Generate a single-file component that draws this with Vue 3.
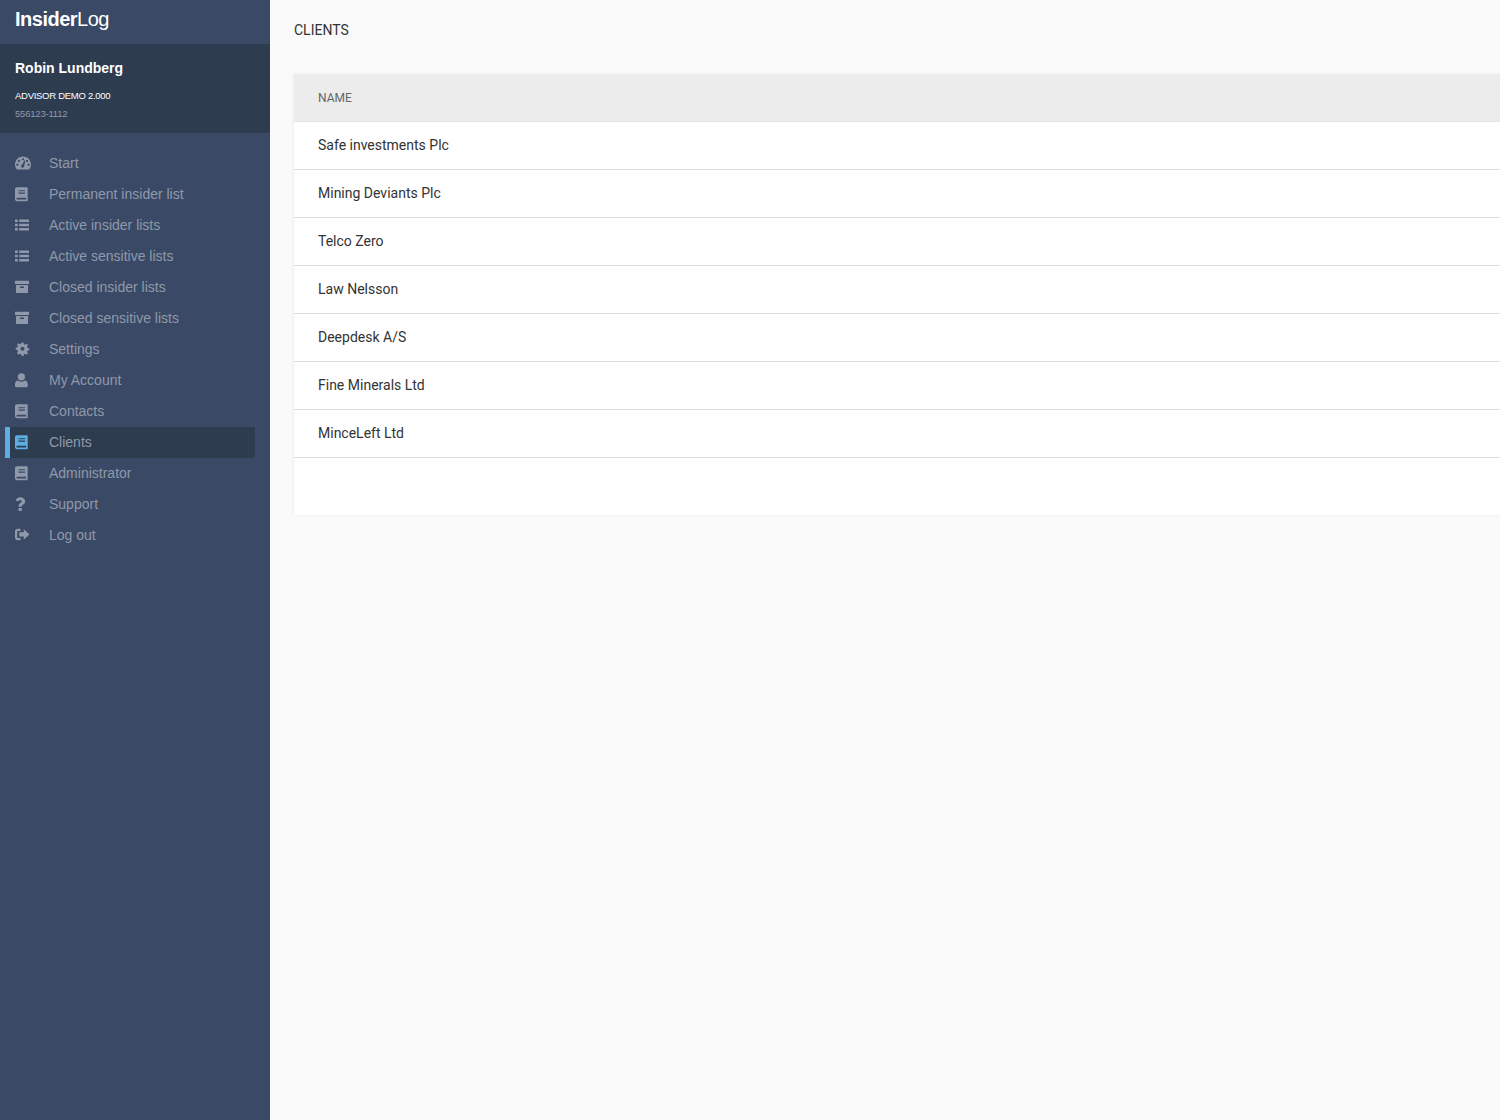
<script setup>
const icons = {
  dash: 'M2 13.500C.8 12.200 0 10.400 0 8.500 0 4.100 3.600.5 8 .5s8 3.600 8 8c0 1.900-.8 3.700-2 5H2zM8 2.200a1.100 1.100 0 1 0 0 2.200 1.100 1.100 0 0 0 0-2.200zM4 3.800a1.100 1.100 0 1 0 0 2.200 1.100 1.100 0 0 0 0-2.200zM12 3.800a1.100 1.100 0 1 0 0 2.200 1.100 1.100 0 0 0 0-2.200zM2.400 7.600a1.100 1.100 0 1 0 0 2.200 1.100 1.100 0 0 0 0-2.200zM13.600 7.600a1.100 1.100 0 1 0 0 2.200 1.100 1.100 0 0 0 0-2.200zM9.600 4.200 7.200 8.600a1.600 1.600 0 1 0 2 .9l1.200-5z',
  book: 'M2 .3h9.700c.7 0 1 .4 1 1v11.900c0 .6-.3 1-1 1H2c-1.200 0-2-.9-2-2.200V2.300C0 1.100.8.300 2 .3zM3.500 3.200v1.100h6.500V3.200H3.500zM3.500 5.600v1.100h6.500V5.600H3.500zM2.500 10.800c-.7 0-1 .4-1 .9s.3.9 1 .9h8.600v-1.800H2.500z',
  list: 'M0 1.500h2.800v2.600H0zM4.200 1.500H14v2.600H4.200zM0 5.700h2.800v2.600H0zM4.200 5.700H14v2.600H4.200zM0 9.900h2.800v2.600H0zM4.200 9.900H14v2.600H4.200z',
  archive: 'M0 .8h14v3.200H0zM1 5h12v8H1zM5 6.500v1.500h4V6.500z',
  gear: 'M6.500.5h2l.4 1.800 1.100.5 1.600-1 1.400 1.400-1 1.600.5 1.100 1.800.4v2l-1.800.4-.5 1.100 1 1.600-1.400 1.400-1.600-1-1.100.5-.4 1.800h-2l-.4-1.800-1.100-.5-1.600 1L2 10.800l1-1.600-.5-1.100-1.800-.4v-2l1.800-.4.5-1.100-1-1.600L3.400 1.200l1.600 1 1.100-.5zM7.500 4.700a2 2 0 1 0 0 4 2 2 0 0 0 0-4z',
  user: 'M6.400.2a3.600 3.600 0 1 1 0 7.200 3.600 3.600 0 0 1 0-7.200zM3 7.600c1 .8 2.200 1.200 3.400 1.200s2.400-.4 3.400-1.200c1.900.2 3 1.600 3 4v1.200c0 .8-.6 1.400-1.400 1.400H1.400C.6 14.200 0 13.600 0 12.800v-1.200c0-2.400 1.100-3.800 3-4z',
  help: 'M.6 3.300C1.400 1.300 3.200.2 5.300.2c2.500 0 4.800 1.800 4.800 4.200 0 1.700-1 2.600-2.300 3.400-.7.500-1 .8-1 1.500v.4H3.600V8.900c0-1.500.7-2.300 1.700-3 .8-.5 1.400-.8 1.400-1.500S6 3.200 5.200 3.200c-.9 0-1.500.5-2.200 1.400zM3.600 11h3.200v3H3.600z',
  out: 'M5.500.7v2.200H3.200c-.6 0-1 .4-1 1v5.200c0 .6.4 1 1 1h2.300v2.200H2.800C1.100 12.100 0 11 0 9.400V3.400C0 1.800 1.100.7 2.800.7zM8.800 1.200 14.500 6.400 8.800 11.600V8.500H4.300V4.300h4.500z'
}
const nav = [
  ['Start','dash'],['Permanent insider list','book'],['Active insider lists','list'],['Active sensitive lists','list'],
  ['Closed insider lists','archive'],['Closed sensitive lists','archive'],['Settings','gear'],['My Account','user'],
  ['Contacts','book'],['Clients','book',true],['Administrator','book'],['Support','help'],['Log out','out']
]
const clients = ['Safe investments Plc','Mining Deviants Plc','Telco Zero','Law Nelsson','Deepdesk A/S','Fine Minerals Ltd','MinceLeft Ltd']
</script>

<template>
  <div class="page">
    <aside class="side">
      <div class="logo"><b>Insider</b>Log</div>
      <div class="profile">
        <div class="who">Robin Lundberg</div>
        <div class="plan">ADVISOR DEMO 2.000</div>
        <div class="org">556123-1112</div>
      </div>
      <nav class="nav">
        <a v-for="n in nav" :key="n[0]" class="item" :class="{ on: n[2] }">
          <svg class="ico" width="16" height="15" viewBox="0 0 16 15"><path :d="icons[n[1]]" fill-rule="evenodd" /></svg>
          <span>{{ n[0] }}</span>
        </a>
      </nav>
    </aside>
    <main class="main">
      <h1 class="title">CLIENTS</h1>
      <section class="card">
        <div class="thead">NAME</div>
        <div v-for="c in clients" :key="c" class="row">{{ c }}</div>
      </section>
    </main>
  </div>
</template>

<style>
html, body { margin: 0; overflow: hidden; background: #fafafa; }
</style>
<style scoped>
.page { display: flex; height: 1120px; width: 1500px; overflow: hidden; background: #fafafa; }
.side { width: 270px; flex: none; background: #3a4966; font-family: "Liberation Sans", Arial, sans-serif; }
.logo { height: 44px; box-sizing: border-box; padding: 8px 15px 0; font-size: 20px; line-height: 23px; color: #fff; letter-spacing: -0.5px; }
.logo b { font-weight: 700; }
.profile { height: 89px; box-sizing: border-box; background: #2e3c50; padding: 16px 15px 0; color: #fff; }
.who { font-size: 14px; font-weight: 700; line-height: 16px; }
.plan { font-size: 9.5px; line-height: 12px; margin-top: 14px; letter-spacing: -.28px; }
.org { font-size: 9.5px; line-height: 12px; margin-top: 6px; color: #8f99aa; letter-spacing: -.2px; }
.nav { display: flex; flex-direction: column; padding-top: 15px; }
.item { height: 31px; display: flex; align-items: center; margin: 0 15px 0 5px; padding: 0 0 0 10px; color: #8f99aa; font-size: 14px; box-sizing: border-box; }
.item span { margin: 0 0 2px 18px; }
.ico { fill: #8f99aa; flex: none; width: 16px; }
.item.on { background: #2e3c50; box-shadow: inset 5px 0 0 #5dade2; }
.item.on .ico { fill: #5dade2; }
.main { flex: 1; min-width: 0; padding-left: 24px; font-family: Roboto, sans-serif; }
.title { margin: 0; padding-top: 22px; height: 74px; box-sizing: border-box; font-size: 14px; font-weight: 400; line-height: 16px; color: #333; }
.card { background: #fff; height: 441px; box-shadow: -1px 0 3px rgba(0,0,0,.06); }
.thead { height: 48px; box-sizing: border-box; background: #ececec; border-bottom: 1px solid #e3e3e3; padding-left: 24px; line-height: 48px; font-size: 12px; font-weight: 400; color: #666; }
.row { height: 48px; box-sizing: border-box; border-bottom: 1px solid #ddd; padding-left: 24px; line-height: 47px; font-size: 14px; color: #333; }
</style>
